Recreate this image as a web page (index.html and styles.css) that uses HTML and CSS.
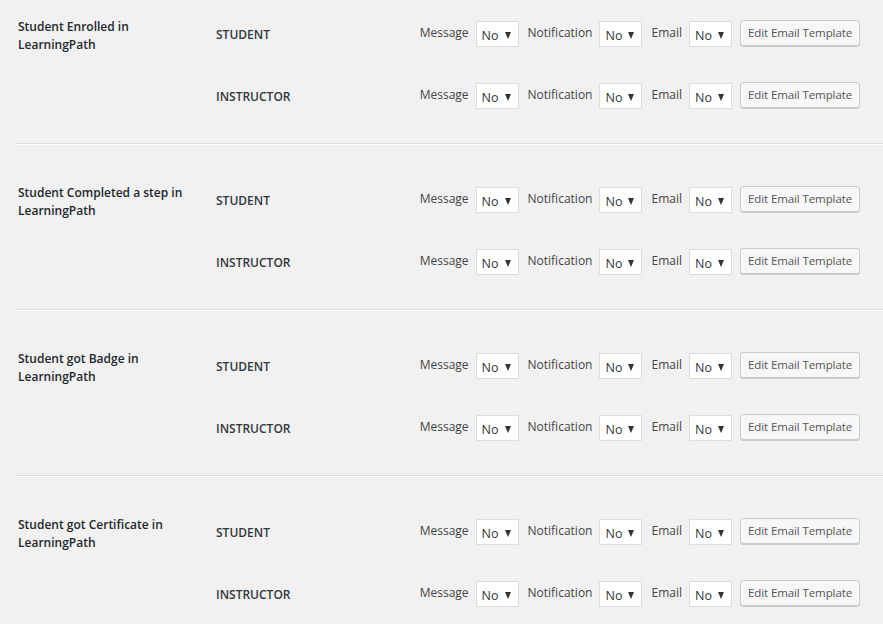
FILE: index.html
```html
<!DOCTYPE html>
<html>
<head>
<meta charset="utf-8">
<link rel="stylesheet" href="styles.css">
</head>
<body>
<div class="page">
  <div class="section">
    <div class="title">Student Enrolled in LearningPath</div>
    <div class="rows">
      <div class="row"><span class="role">STUDENT</span>
        <div class="controls">
          <span class="lbl">Message</span><span class="sel">No<i class="arr"></i></span>
          <span class="lbl">Notification</span><span class="sel">No<i class="arr"></i></span>
          <span class="lbl">Email</span><span class="sel">No<i class="arr"></i></span>
          <span class="btn">Edit Email Template</span>
        </div>
      </div>
      <div class="row"><span class="role">INSTRUCTOR</span>
        <div class="controls">
          <span class="lbl">Message</span><span class="sel">No<i class="arr"></i></span>
          <span class="lbl">Notification</span><span class="sel">No<i class="arr"></i></span>
          <span class="lbl">Email</span><span class="sel">No<i class="arr"></i></span>
          <span class="btn">Edit Email Template</span>
        </div>
      </div>
    </div>
  </div>
  <div class="section">
    <div class="title">Student Completed a step in LearningPath</div>
    <div class="rows">
      <div class="row"><span class="role">STUDENT</span>
        <div class="controls">
          <span class="lbl">Message</span><span class="sel">No<i class="arr"></i></span>
          <span class="lbl">Notification</span><span class="sel">No<i class="arr"></i></span>
          <span class="lbl">Email</span><span class="sel">No<i class="arr"></i></span>
          <span class="btn">Edit Email Template</span>
        </div>
      </div>
      <div class="row"><span class="role">INSTRUCTOR</span>
        <div class="controls">
          <span class="lbl">Message</span><span class="sel">No<i class="arr"></i></span>
          <span class="lbl">Notification</span><span class="sel">No<i class="arr"></i></span>
          <span class="lbl">Email</span><span class="sel">No<i class="arr"></i></span>
          <span class="btn">Edit Email Template</span>
        </div>
      </div>
    </div>
  </div>
  <div class="section">
    <div class="title">Student got Badge in LearningPath</div>
    <div class="rows">
      <div class="row"><span class="role">STUDENT</span>
        <div class="controls">
          <span class="lbl">Message</span><span class="sel">No<i class="arr"></i></span>
          <span class="lbl">Notification</span><span class="sel">No<i class="arr"></i></span>
          <span class="lbl">Email</span><span class="sel">No<i class="arr"></i></span>
          <span class="btn">Edit Email Template</span>
        </div>
      </div>
      <div class="row"><span class="role">INSTRUCTOR</span>
        <div class="controls">
          <span class="lbl">Message</span><span class="sel">No<i class="arr"></i></span>
          <span class="lbl">Notification</span><span class="sel">No<i class="arr"></i></span>
          <span class="lbl">Email</span><span class="sel">No<i class="arr"></i></span>
          <span class="btn">Edit Email Template</span>
        </div>
      </div>
    </div>
  </div>
  <div class="section">
    <div class="title">Student got Certificate in LearningPath</div>
    <div class="rows">
      <div class="row"><span class="role">STUDENT</span>
        <div class="controls">
          <span class="lbl">Message</span><span class="sel">No<i class="arr"></i></span>
          <span class="lbl">Notification</span><span class="sel">No<i class="arr"></i></span>
          <span class="lbl">Email</span><span class="sel">No<i class="arr"></i></span>
          <span class="btn">Edit Email Template</span>
        </div>
      </div>
      <div class="row"><span class="role">INSTRUCTOR</span>
        <div class="controls">
          <span class="lbl">Message</span><span class="sel">No<i class="arr"></i></span>
          <span class="lbl">Notification</span><span class="sel">No<i class="arr"></i></span>
          <span class="lbl">Email</span><span class="sel">No<i class="arr"></i></span>
          <span class="btn">Edit Email Template</span>
        </div>
      </div>
    </div>
  </div>
</div>
</body>
</html>
```
FILE: styles.css
```css
html, body {
  margin: 0;
  padding: 0;
  background: #f1f1f1;
}
body {
  font-family: "Open Sans", "Noto Sans", sans-serif;
  font-size: 12px;
  color: #23282d;
  overflow: hidden;
}
.page {
  padding-left: 16px;
}
.section {
  display: flex;
  padding: 41px 0 33px 0;
  border-bottom: 1px solid #dddddd;
  box-shadow: 0 1px 0 #ffffff;
  margin-bottom: 1px;
}
.section:first-child {
  padding-top: 20px;
}
.title {
  width: 182px;
  padding-left: 2px;
  margin-right: 16px;
  font-size: 12px;
  font-weight: 600;
  line-height: 18px;
  margin-top: -2px;
}
.rows {
  flex: 1;
  display: flex;
  flex-direction: column;
  gap: 34px;
  padding-right: 23px;
}
.row {
  display: flex;
  align-items: center;
  height: 28px;
}
.role {
  font-weight: 600;
  font-size: 12px;
  color: #32373c;
}
.controls {
  margin-left: auto;
  display: flex;
  align-items: center;
  height: 28px;
}
.lbl {
  color: #444;
  padding-bottom: 4px;
  margin-right: 7px;
  margin-left: 9px;
}
.sel {
  position: relative;
  box-sizing: border-box;
  width: 43px;
  height: 26px;
  background: #fff;
  border: 1px solid #dddddd;
  color: #32373c;
  padding-left: 5px;
  padding-top: 2px;
  line-height: 24px;
  font-size: 12.5px;
}
.arr {
  position: absolute;
  right: 7px;
  top: 10px;
  width: 0;
  height: 0;
  border-left: 3.5px solid transparent;
  border-right: 3.5px solid transparent;
  border-top: 7px solid #333;
}
.btn {
  box-sizing: border-box;
  margin-left: 8px;
  width: 120px;
  height: 26px;
  margin-bottom: 2px;
  line-height: 24px;
  text-align: center;
  background: #f7f7f7;
  border: 1px solid #cccccc;
  border-radius: 3px;
  box-shadow: 0 1px 0 #cccccc;
  color: #555;
  font-size: 11.5px;
  letter-spacing: -0.1px;
}
```
